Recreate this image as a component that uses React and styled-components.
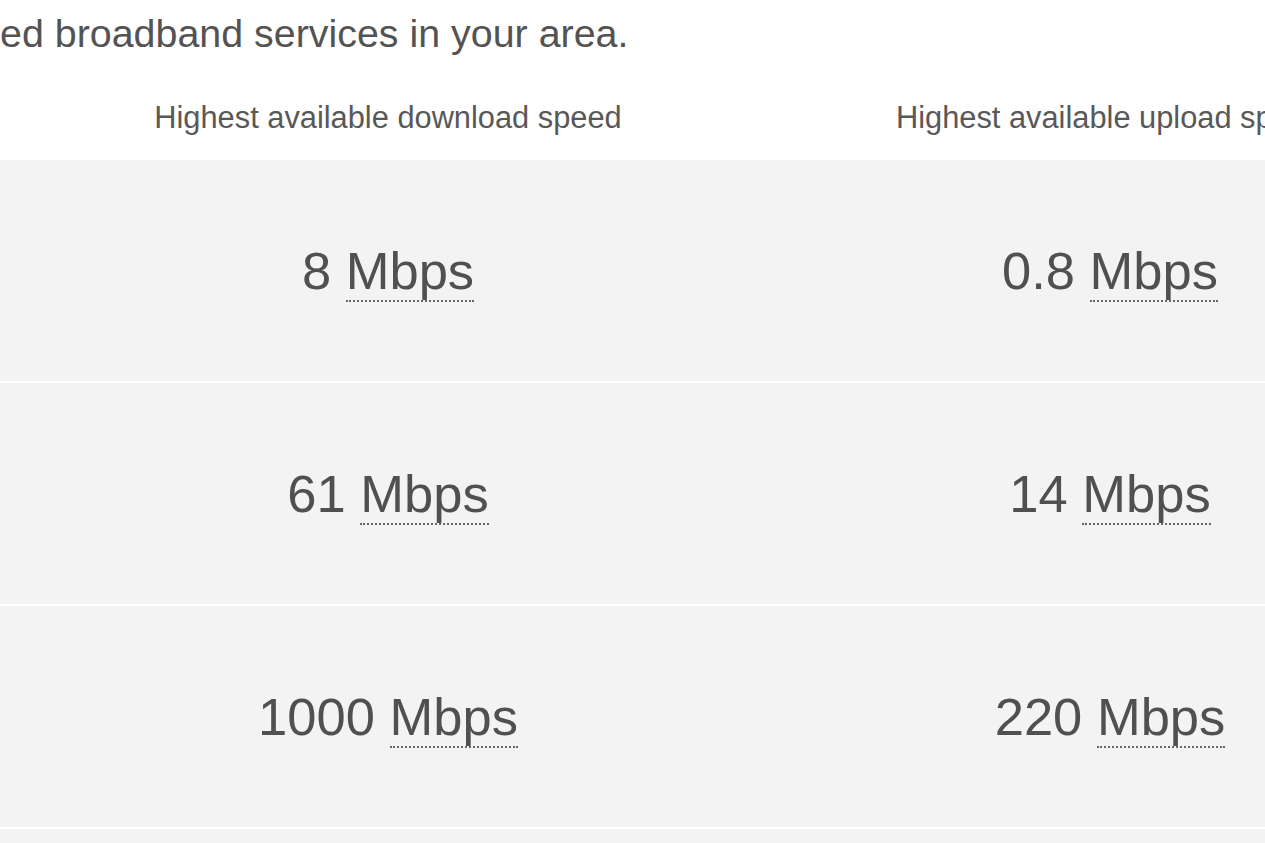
import React from "react";
import styled, { createGlobalStyle } from "styled-components";

const GlobalStyle = createGlobalStyle`
  html, body {
    margin: 0;
    padding: 0;
    overflow: hidden;
    background: #fff;
  }
  body {
    font-family: "Liberation Sans", Arial, sans-serif;
    color: #555;
  }
`;

const Page = styled.div`
  width: 1265px;
  height: 843px;
  overflow: hidden;
`;

const Intro = styled.p`
  margin: 0;
  padding-top: 11px;
  font-size: 39.4px;
  line-height: normal;
  color: #535353;
  white-space: nowrap;
`;

const Table = styled.div`
  display: grid;
  grid-template-columns: 27px 722px 722px;
  row-gap: 2px;
  width: max-content;
`;

const HeadCell = styled.div`
  padding: 44px 0 22px;
  font-size: 30.8px;
  line-height: normal;
  text-align: center;
  white-space: nowrap;
  color: #585858;
`;

const Cell = styled.div`
  height: 221px;
  background: #f3f3f3;
  display: flex;
  align-items: center;
  justify-content: center;
  font-size: 52.5px;
  line-height: normal;
  color: #505050;
  white-space: nowrap;
`;

const Unit = styled.abbr`
  text-decoration: none;
  border-bottom: 2px dotted #666;
  cursor: help;
  margin-left: 0.278em;
`;

const rows = [
  { down: "8", up: "0.8" },
  { down: "61", up: "14" },
  { down: "1000", up: "220" },
  { down: null, up: null },
];

const Speed = ({ value }) =>
  value ? (
    <span>
      {value}
      <Unit title="Megabits per second">Mbps</Unit>
    </span>
  ) : null;

const App = () => (
  <Page>
    <GlobalStyle />
    <Intro>ed broadband services in your area.</Intro>
    <Table>
      <HeadCell />
      <HeadCell>Highest available download speed</HeadCell>
      <HeadCell>Highest available upload speed</HeadCell>
      {rows.map((row, index) => (
        <React.Fragment key={index}>
          <Cell />
          <Cell>
            <Speed value={row.down} />
          </Cell>
          <Cell>
            <Speed value={row.up} />
          </Cell>
        </React.Fragment>
      ))}
    </Table>
  </Page>
);

export default App;
